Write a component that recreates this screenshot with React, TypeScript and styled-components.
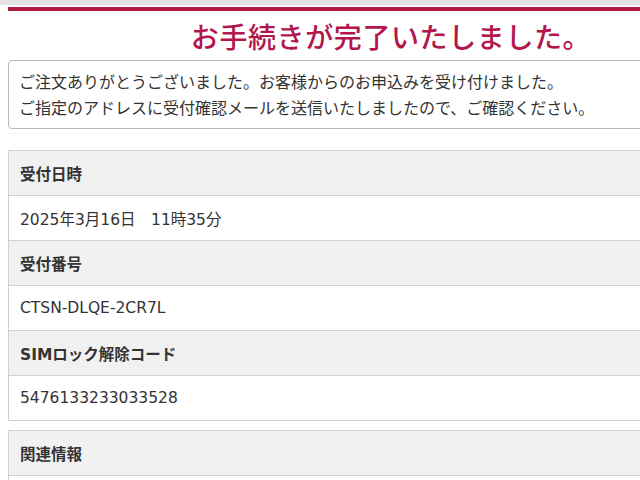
import React from "react";
import styled, { createGlobalStyle } from "styled-components";

const GlobalStyle = createGlobalStyle`
  html, body {
    margin: 0;
    padding: 0;
    background: #fff;
    overflow: hidden;
  }
  body {
    font-family: "DejaVu Sans", "Noto Sans CJK JP", sans-serif;
    color: #333;
  }
`;

interface Row {
  label: string;
  value?: string;
}

const orderRows: Row[] = [
  { label: "受付日時", value: "2025年3月16日　11時35分" },
  { label: "受付番号", value: "CTSN-DLQE-2CR7L" },
  { label: "SIMロック解除コード", value: "5476133233033528" },
];

const App: React.FC = () => {
  return (
    <>
      <GlobalStyle />
      <TopStrip />
      <Page>
        <RedRule />
        <Title>お手続きが完了いたしました。</Title>
        <Message>
          <p>ご注文ありがとうございました。お客様からのお申込みを受け付けました。</p>
          <p>ご指定のアドレスに受付確認メールを送信いたしましたので、ご確認ください。</p>
        </Message>
        <Divider />
        <Table>
          {orderRows.map((row) => (
            <React.Fragment key={row.label}>
              <HeadCell>{row.label}</HeadCell>
              <ValueCell>{row.value}</ValueCell>
            </React.Fragment>
          ))}
        </Table>
        <Table $gap>
          <HeadCell>関連情報</HeadCell>
          <ValueCell />
        </Table>
      </Page>
    </>
  );
};

export default App;

const TopStrip = styled.div`
  height: 5px;
  background: #e4e4e4;
`;

const Page = styled.div`
  width: 754px;
  margin-left: 8px;
`;

const RedRule = styled.div`
  margin-top: 2px;
  height: 4px;
  background: #b31c3e;
`;

const Title = styled.h1`
  margin: 0;
  height: 49px;
  line-height: 50px;
  text-align: center;
  font-family: "Noto Sans CJK JP", sans-serif;
  font-size: 28px;
  font-weight: 500;
  color: #b3164a;
  letter-spacing: 0.6px;
  padding-left: 12px;
`;

const Message = styled.div`
  border: 1px solid #b8b8b8;
  border-radius: 4px;
  padding: 7px 10px 8px;
  font-family: "Noto Sans CJK JP", sans-serif;
  font-size: 16px;
  line-height: 26px;
  color: #333;

  p {
    margin: 0;
  }
`;

const Divider = styled.div`
  margin-top: 4px;
  border-top: 1px dotted #ececec;
  height: 16px;
`;

const Table = styled.div<{ $gap?: boolean }>`
  border: 1px solid #cfcfcf;
  border-bottom: none;
  margin-top: ${(p) => (p.$gap ? "9px" : "0")};
  display: flex;
  flex-direction: column;
`;

const HeadCell = styled.div`
  height: 44px;
  border-bottom: 1px solid #cfcfcf;
  background: #f1f1f1;
  padding-left: 11px;
  display: flex;
  align-items: center;
  font-size: 15.5px;
  font-weight: 700;
  color: #333;
`;

const ValueCell = styled.div`
  height: 44px;
  border-bottom: 1px solid #cfcfcf;
  background: #fff;
  padding-left: 11px;
  display: flex;
  align-items: center;
  font-size: 15.5px;
  color: #333;
`;
